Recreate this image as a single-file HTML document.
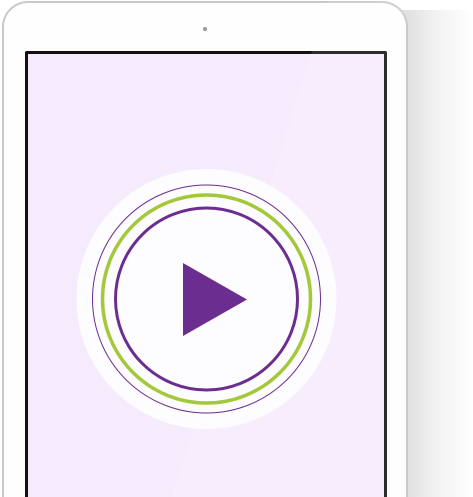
<!DOCTYPE html>
<html><head><meta charset="utf-8"><style>
html,body{margin:0;padding:0;width:473px;height:497px;overflow:hidden;background:#fff;}
.wrap{position:relative;width:473px;height:497px;overflow:hidden;}
.shadow{position:absolute;left:400px;top:10px;width:73px;height:487px;background:linear-gradient(90deg,#dcdcdc,#f2f2f2 50%,#fff);}
.dev{position:absolute;left:2px;top:1px;width:406px;height:496px;background:#fefefe;border:2px solid #c9c9c9;border-bottom:none;border-radius:26px 26px 0 0;box-sizing:border-box;}
.cam{position:absolute;left:199px;top:24px;width:4px;height:4px;border-radius:50%;background:#999;}
.scr{position:absolute;left:25px;top:51px;width:362px;height:446px;background:#f6ebfc;border:3px solid #111;border-bottom:none;box-sizing:border-box;border-radius:2px 2px 0 0;}
</style></head><body><div class="wrap">
<div class="shadow"></div>
<div class="dev"><div class="cam"></div></div>
<div class="scr"></div>
<svg style="position:absolute;left:0;top:0" width="473" height="497">
<polygon points="328,0 406,0 406,497 172,497" fill="#ffffff" opacity="0.12"/>
<circle cx="206.5" cy="299" r="130" fill="#fdfcfe"/>
<circle cx="206.5" cy="299" r="114" fill="none" stroke="#6b2d8f" stroke-width="1"/>
<circle cx="206.5" cy="299" r="104" fill="none" stroke="#a3c93a" stroke-width="3.5"/>
<circle cx="206.5" cy="299" r="91" fill="none" stroke="#6b2d8f" stroke-width="3"/>
<polygon points="183,263 183,336 247,299.5" fill="#6b2d8f"/>
</svg>
</div></body></html>
